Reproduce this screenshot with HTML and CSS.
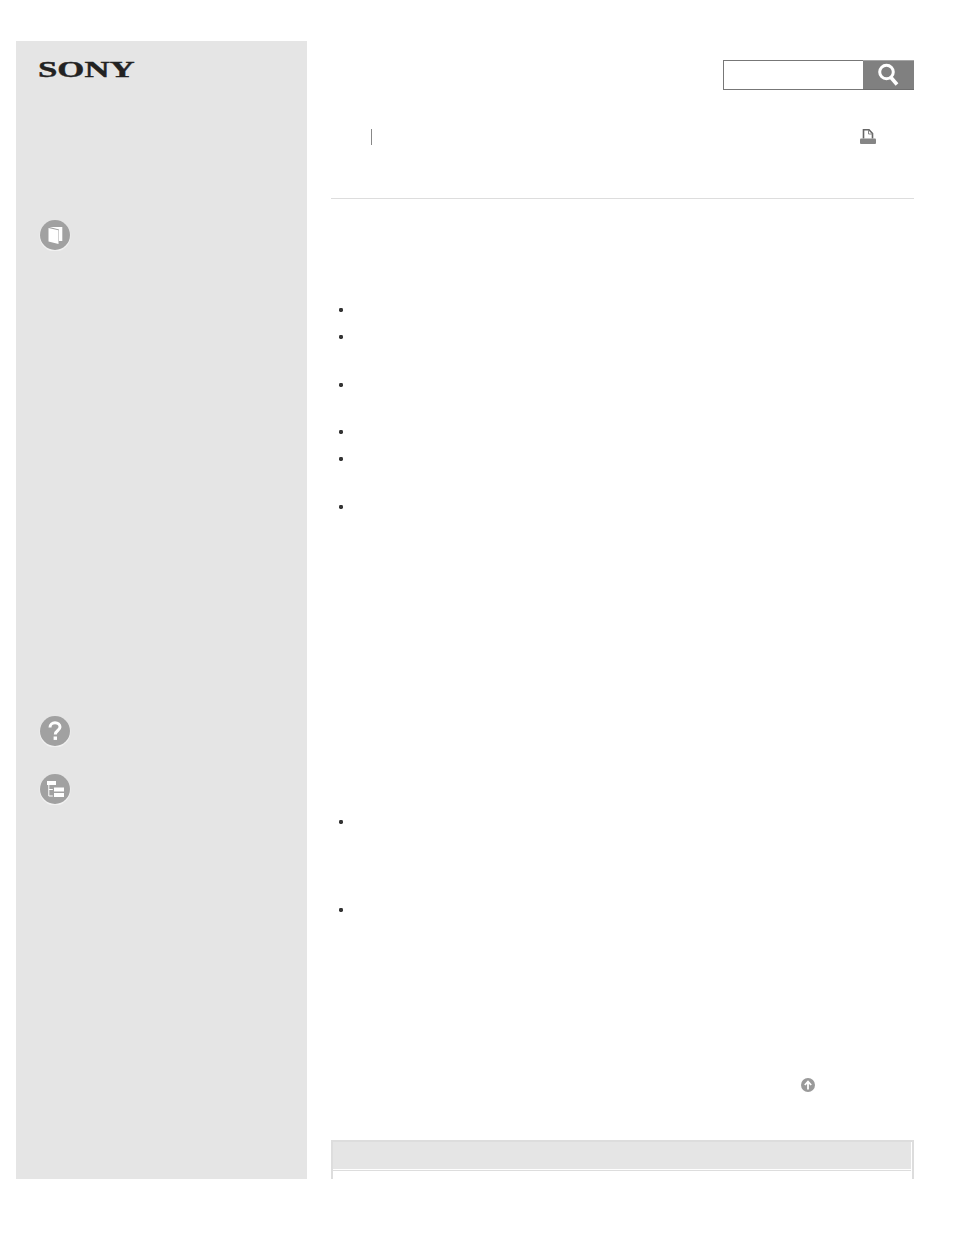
FILE: index.html
```html
<!DOCTYPE html>
<html lang="en">
<head>
    <meta charset="UTF-8">
    <title>Sony Help Guide</title>
    <link rel="stylesheet" href="styles.css">
</head>
<body>
    <div class="page">
        <!-- Left sidebar -->
        <aside class="sidebar">
            <div class="logo"><span class="logo-text">SONY</span></div>

            <svg class="nav-icon icon-book" width="32" height="32" viewBox="0 0 32 32">
                <circle cx="16" cy="17" r="15.5" fill="#f1f1f1"/>
                <circle cx="16" cy="16" r="15" fill="#a1a1a1"/>
                <path d="M10.500 8h12.800v14h-3.300V10.500L10.500 8z" fill="#fff"/>
                <path d="M9.500 9l10 2.300V25l-10-2.600V9z" fill="#fff"/>
            </svg>

            <svg class="nav-icon icon-help" width="32" height="32" viewBox="0 0 32 32">
                <circle cx="16" cy="17" r="15.500" fill="#f1f1f1"/>
                <circle cx="16" cy="16" r="15" fill="#a1a1a1"/>
                <path d="M11 12.500c0-3 2.200-4.700 5-4.700s5 1.700 5 4.300c0 3.400-4.700 3.500-4.700 7.400" fill="none" stroke="#fff" stroke-width="3"/>
                <rect x="14.600" y="21.500" width="3.400" height="3.400" fill="#fff"/>
            </svg>

            <svg class="nav-icon icon-tree" width="32" height="32" viewBox="0 0 32 32">
                <circle cx="16" cy="17" r="15.500" fill="#f1f1f1"/>
                <circle cx="16" cy="16" r="15" fill="#a1a1a1"/>
                <rect x="8" y="8" width="9" height="4" fill="#fff"/>
                <path d="M9.800 12v11M9.800 16.500h4M9.800 23h4" fill="none" stroke="#fff" stroke-width="1"/>
                <rect x="15" y="14.500" width="10" height="4" fill="#fff"/>
                <rect x="15" y="20" width="10" height="4" fill="#fff"/>
            </svg>
        </aside>

        <!-- Main content -->
        <main class="content">
            <div class="search-row">
                <div class="search-box">
                    <input class="search-input" type="text">
                    <button class="search-button" type="button">
                        <svg width="24" height="26" viewBox="0 0 24 26">
                            <circle cx="9.500" cy="10" r="6.800" fill="none" stroke="#fff" stroke-width="3"/>
                            <path d="M14 15.500l6 7" fill="none" stroke="#fff" stroke-width="3.600"/>
                        </svg>
                    </button>
                </div>
            </div>

            <div class="crumb-row">
                <span class="crumb-sep"></span>
                <svg class="print-icon" width="16" height="16" viewBox="0 0 16 16">
                    <path d="M3.500 9.500V.8h5.500l3.500 3.700v5" fill="none" stroke="#666" stroke-width="1.600"/>
                    <path d="M8.500 1v4h4" fill="none" stroke="#888" stroke-width="1"/>
                    <rect x="0" y="9.500" width="16" height="5.500" rx="1" fill="#858585"/>
                </svg>
            </div>

            <ul class="bullets first-list">
                <li class="rows-1"></li>
                <li class="rows-2"></li>
                <li class="rows-2 tight"></li>
                <li class="rows-1"></li>
                <li class="rows-2"></li>
                <li class="rows-1"></li>
            </ul>

            <ul class="bullets second-list">
                <li class="rows-4"></li>
                <li class="rows-1"></li>
            </ul>

            <div class="back-top">
                <svg width="14" height="14" viewBox="0 0 14 14">
                    <circle cx="7" cy="7" r="7" fill="#9a9a9a"/>
                    <path d="M7 11.500V4M3.800 7L7 3.600 10.200 7" fill="none" stroke="#fff" stroke-width="1.800"/>
                </svg>
            </div>

            <div class="related">
                <div class="related-head"></div>
            </div>
        </main>
    </div>
</body>
</html>
```

FILE: styles.css
```css
body {
    margin: 0;
    background: #fff;
    font-family: "Liberation Sans", sans-serif;
    color: #333;
}

/* Page frame, clipped at the bottom like the printed page */
.page {
    display: flex;
    gap: 24px;
    width: 898px;
    height: 1138px;
    margin: 41px 0 0 16px;
    overflow: hidden;
}

/* Sidebar */
.sidebar {
    display: flex;
    flex-direction: column;
    align-items: flex-start;
    flex: none;
    width: 267px;
    padding-left: 24px;
    background: #e5e5e5;
}

.logo {
    height: 40px;
    padding-top: 15px;
    margin-left: -2px;
    box-sizing: border-box;
}

.logo-text {
    display: block;
    width: 68px;
    font-family: "Liberation Serif", serif;
    font-size: 24px;
    line-height: 27px;
    font-weight: bold;
    color: #222;
    -webkit-text-stroke: 0.4px #222;
    transform: scaleX(1.45);
    transform-origin: left center;
}

.nav-icon {
    display: block;
    margin-left: -1px;
}

.icon-book {
    margin-top: 138px;
}

.icon-help {
    margin-top: 464px;
}

.icon-tree {
    margin-top: 26px;
}

/* Main column */
.content {
    flex: none;
    width: 583px;
}

.search-row {
    display: flex;
    justify-content: flex-end;
    padding-top: 19px;
}

.search-box {
    display: flex;
    width: 191px;
    height: 30px;
}

.search-input {
    flex: none;
    width: 140px;
    height: 30px;
    box-sizing: border-box;
    margin: 0;
    padding: 0;
    border: 1px solid #777;
    border-right: 0;
    background: #fff;
}

.search-button {
    display: flex;
    align-items: center;
    justify-content: center;
    flex: none;
    width: 51px;
    height: 30px;
    padding: 0;
    border: 0;
    border-top: 1px solid #a5a5a5;
    border-bottom: 1px solid #6e6e6e;
    background: #808080;
}

.crumb-row {
    display: flex;
    align-items: flex-start;
    justify-content: space-between;
    height: 109px;
    padding: 39px 38px 0 40px;
    box-sizing: border-box;
    border-bottom: 1px solid #ddd;
}

.crumb-sep {
    width: 1px;
    height: 16px;
    background: #888;
}

.print-icon {
    display: block;
}

/* Bullet lists */
.bullets {
    list-style: none;
    margin: 0;
    padding: 0;
}

.bullets li {
    display: flex;
    align-items: flex-start;
    padding-left: 8px;
}

.bullets li::before {
    content: "";
    width: 4px;
    height: 4px;
    margin-top: 9px;
    border-radius: 35%;
    background: #333;
}

.first-list {
    margin-top: 100px;
}

.second-list {
    margin-top: 288px;
}

.rows-1 {
    height: 27px;
}

.rows-2 {
    height: 48px;
}

.rows-2.tight {
    height: 47px;
}

.rows-4 {
    height: 88px;
}

/* Back to top */
.back-top {
    display: flex;
    justify-content: flex-end;
    margin-top: 152px;
    padding-right: 99px;
    height: 14px;
}

.back-top svg {
    display: block;
}

/* Related topics table, cut off by the page edge */
.related {
    margin-top: 48px;
    height: 60px;
    border: 2px solid #ddd;
    border-bottom: 0;
}

.related-head {
    height: 27px;
    margin-right: 1px;
    background: #e5e5e5;
    border-bottom: 1px solid #fff;
    box-shadow: 0 1px 0 #ddd;
}
```
